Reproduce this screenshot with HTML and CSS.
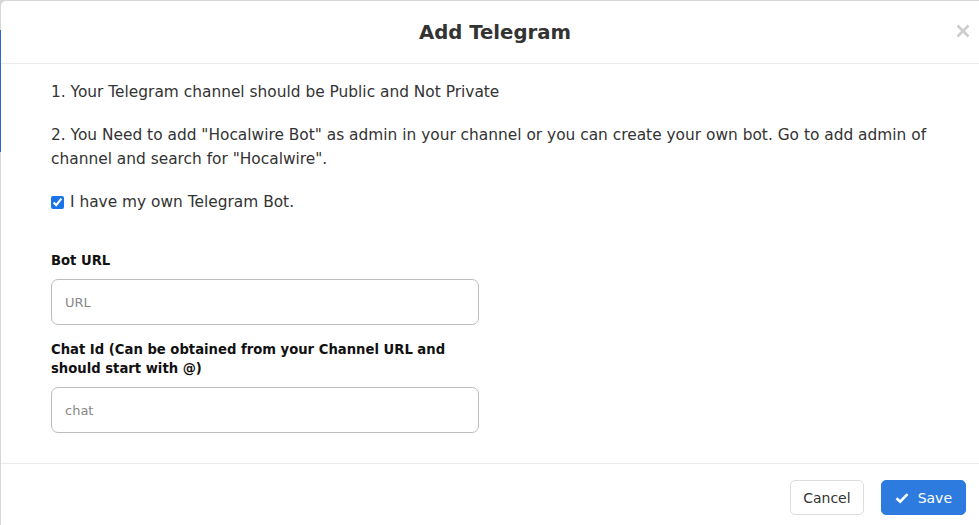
FILE: index.html
```html
<html>
    <head>
        <title>Add Telegram</title>
        <meta name="viewport" content="width=device-width, initial-scale=1.0">
        <link rel="stylesheet" href="styles.css">
    </head>
    <body>
    <div class="backdrop-strip"></div>
    <div class="modal">
        <div class="modal-header">
            <h4 class="modal-title">Add Telegram</h4>
            <span class="close-btn">
                <svg width="14" height="14" viewBox="0 0 14 14"><path d="M1.5 1.5 L12.5 12.5 M12.5 1.5 L1.5 12.5" stroke="#cdcdcd" stroke-width="2.6" fill="none"/></svg>
            </span>
        </div>
        <div class="modal-body">
            <p class="note">1. Your Telegram channel should be Public and Not Private</p>
            <p class="note">2. You Need to add "Hocalwire Bot" as admin in your channel or you can create your own bot. Go to add admin of channel and search for "Hocalwire".</p>
            <label class="check-row">
                <input type="checkbox" checked> I have my own Telegram Bot.
            </label>

            <div class="field">
                <label class="field-label">Bot URL</label>
                <input class="field-input" type="text" placeholder="URL">
            </div>
            <div class="field">
                <label class="field-label">Chat Id (Can be obtained from your Channel URL and should start with @)</label>
                <input class="field-input" type="text" placeholder="chat">
            </div>
        </div>
        <div class="modal-footer">
            <button class="btn btn-cancel">Cancel</button>
            <button class="btn btn-save">
                <svg width="14" height="12" viewBox="0 0 14 12"><path d="M1.5 6.2 L5.2 9.6 L12.5 2.2" fill="none" stroke="#fff" stroke-width="2.6"/></svg>
                Save
            </button>
        </div>
    </div>
    </body>
</html>
```

FILE: styles.css
```css
body{
    margin: 0;
    background-color: #d6d6d6;
    font-family: 'DejaVu Sans', sans-serif;
    color: #333;
    overflow: hidden;
}

.backdrop-strip{
    position: absolute;
    left: 0;
    top: 30px;
    width: 2px;
    height: 122px;
    background-color: #2a6ccb;
}

.modal{
    position: relative;
    margin-left: 1px;
    margin-top: 1px;
    background-color: #fff;
    border-radius: 5px 0 0 0;
    height: 524px;
}

.modal-header{
    height: 62px;
    border-bottom: 1px solid #e9ecef;
    display: flex;
    align-items: center;
    justify-content: center;
    padding-left: 10px;
}

.modal-title{
    margin: 0;
    font-size: 19.7px;
    font-weight: bold;
    color: #333;
}

.close-btn{
    position: absolute;
    right: 9px;
    top: 23px;
    line-height: 0;
}

.modal-body{
    padding: 16px 50px 15px 50px;
}

.note{
    margin: 0 0 19px 0;
    font-size: 15.4px;
    line-height: 24px;
}

.check-row{
    display: flex;
    align-items: center;
    font-size: 15.4px;
    line-height: 24px;
    margin-top: 6px;
    margin-bottom: 37px;
}

.check-row input{
    margin: 0 6px 0 0;
    width: 13px;
    height: 13px;
    accent-color: #1a73e8;
}

.field{
    width: 428px;
    margin-bottom: 15px;
}

.field-label{
    display: block;
    font-size: 13.2px;
    font-weight: bold;
    line-height: 19px;
    color: #111;
    margin-bottom: 9px;
}

.field-input{
    display: block;
    width: 428px;
    height: 46px;
    box-sizing: border-box;
    border: 1px solid #bdbdbd;
    border-radius: 7px;
    padding: 0 13px;
    font-family: 'DejaVu Sans', sans-serif;
    font-size: 13px;
}

.field-input::placeholder{
    color: #888;
}

.modal-footer{
    border-top: 1px solid #e9ecef;
    display: flex;
    justify-content: flex-end;
    gap: 17px;
    padding: 16px 13px;
}

.btn{
    height: 35px;
    border-radius: 5px;
    font-family: 'DejaVu Sans', sans-serif;
    font-size: 14px;
    padding: 0 13px;
    display: flex;
    align-items: center;
    gap: 9px;
}

.btn-cancel{
    padding: 0 12px;
    background-color: #fff;
    border: 1px solid #dcdcdc;
    color: #333;
}

.btn-save{
    background-color: #2e7bdf;
    border: 1px solid #2e7bdf;
    color: #fff;
}
```
